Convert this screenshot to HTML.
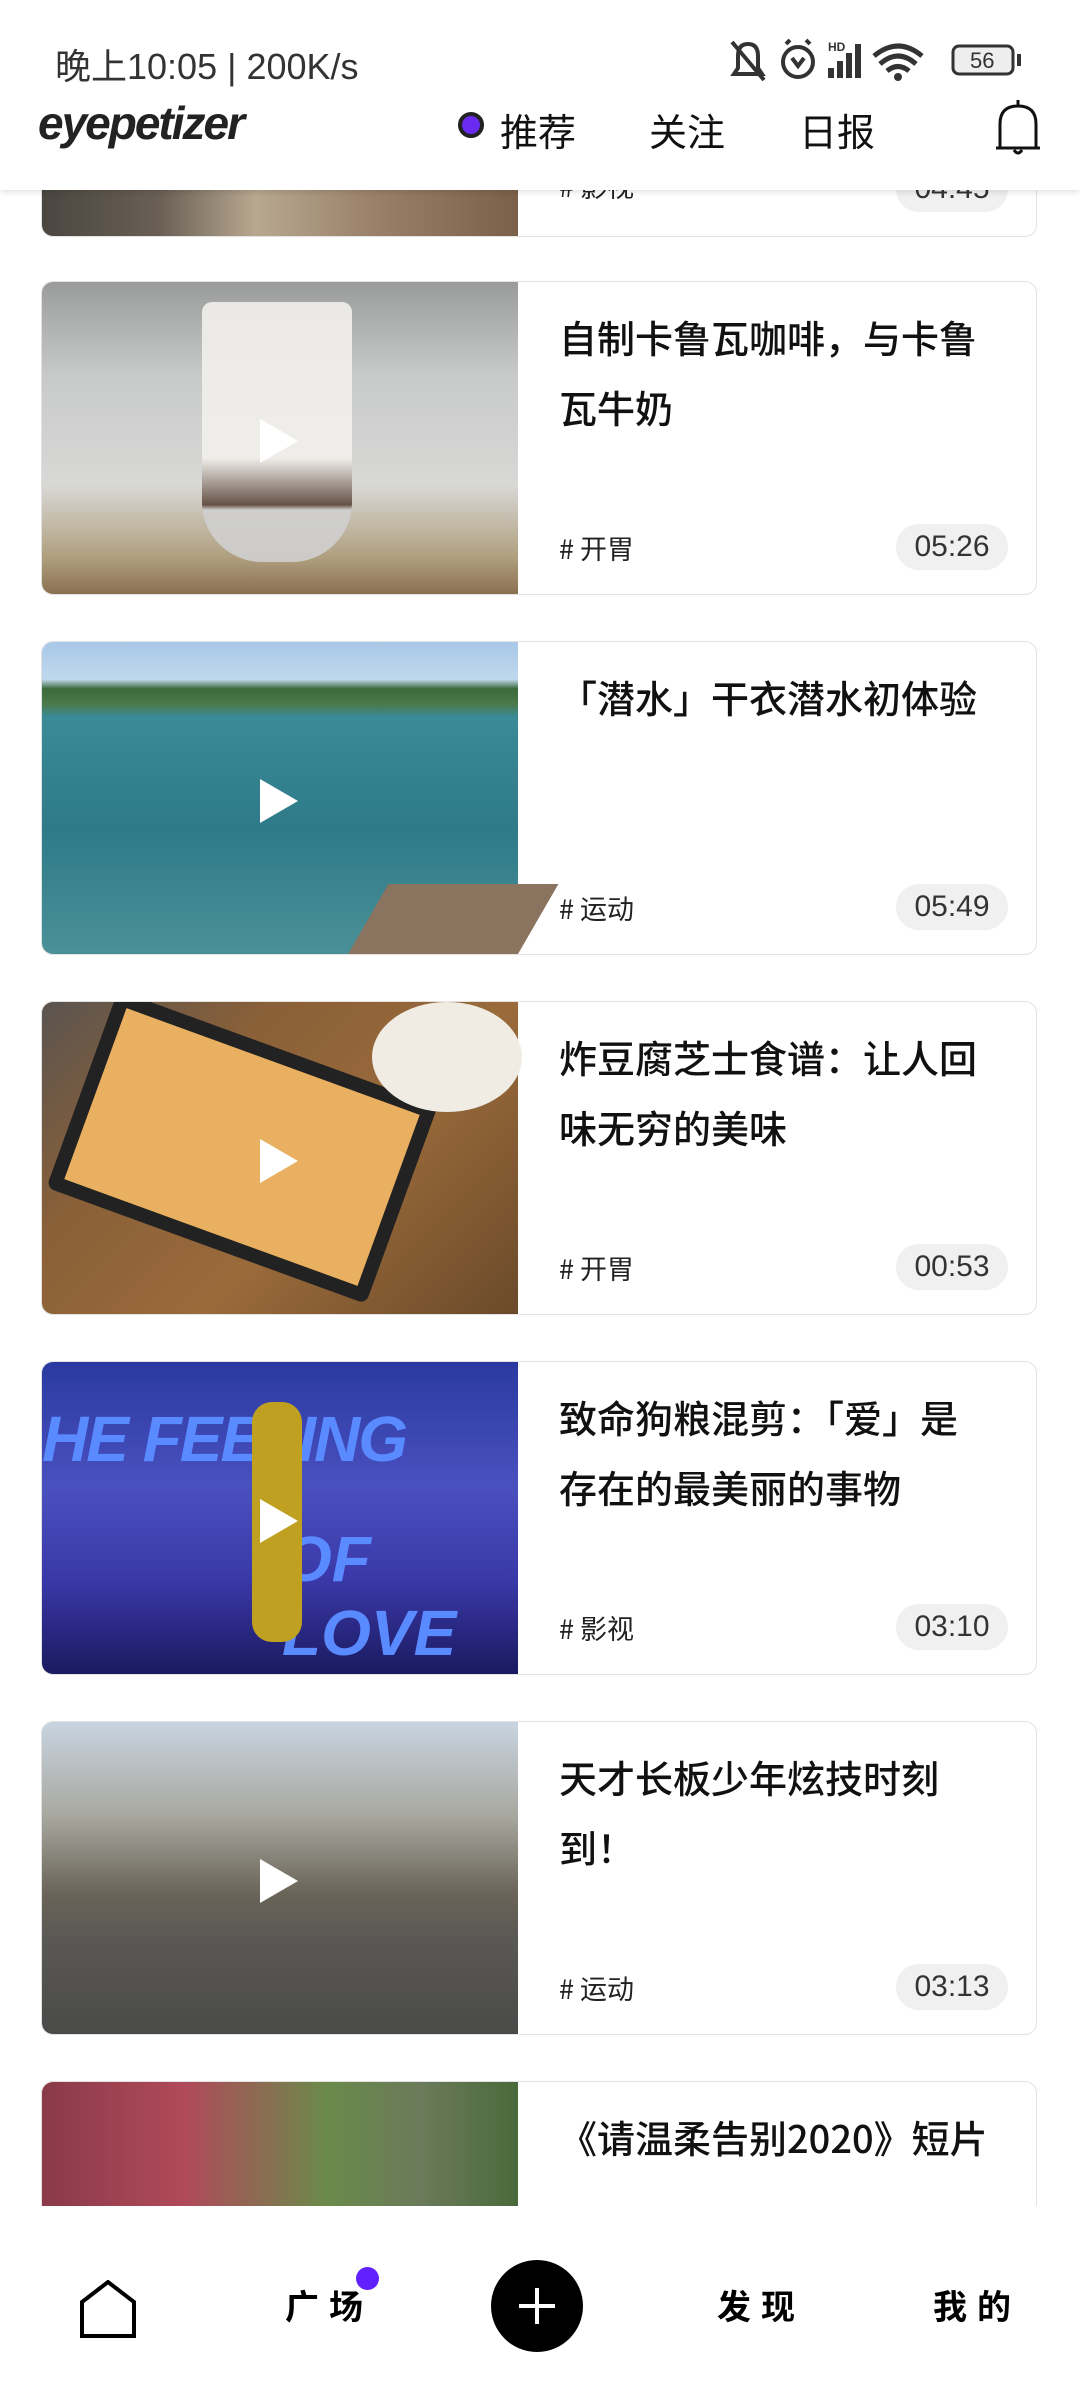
<!DOCTYPE html>
<html><head><meta charset="utf-8">
<style>
*{margin:0;padding:0;box-sizing:border-box}
body{width:1080px;height:2400px;overflow:hidden;background:#fff;font-family:"Liberation Sans","Noto Sans CJK SC",sans-serif;position:relative}
.card{position:absolute;left:41px;width:996px;height:314px;border:1.5px solid #e2e2e2;border-radius:12px;overflow:hidden;background:#fff}
.thumb{position:absolute;left:0;top:0;width:476px;height:100%}
.play{position:absolute;left:218px;top:137px;width:0;height:0;border-left:38px solid #fff;border-top:22px solid transparent;border-bottom:22px solid transparent}
.title{position:absolute;left:517px;top:20px;width:432px;font-size:38px;line-height:70px;color:#111;font-family:"Noto Sans CJK SC",sans-serif;font-weight:500}
.tag{position:absolute;left:517px;top:246px;font-size:27px;color:#222;font-family:"Noto Sans CJK SC",sans-serif}
.dur{position:absolute;right:28px;top:242px;width:112px;height:46px;border-radius:23px;background:#f0f0f0;font-size:30px;line-height:46px;text-align:center;color:#333}
.hdr{position:absolute;left:0;top:0;width:1080px;height:190px;background:#fff;box-shadow:0 2px 6px rgba(0,0,0,.12);z-index:5}
.nav{position:absolute;left:0;top:2206px;width:1080px;height:194px;background:#fff;z-index:5}
</style></head><body>

<div class="card" style="top:-77px"><div class="thumb" style="background:linear-gradient(90deg,#4a4640 0%,#6a6055 25%,#b8a890 45%,#9a8068 70%,#7a6048 100%)"></div>
<div class="tag" style="top:242px"># 影视</div><div class="dur">04:45</div></div>

<div class="card" style="top:281px"><div class="thumb" style="background:linear-gradient(180deg,#9a9c9c 0%,#c8caca 30%,#d8d8d6 65%,#b0a080 88%,#8a7050 100%)"><div style="position:absolute;left:160px;top:20px;width:150px;height:260px;background:linear-gradient(180deg,#f2f0ec 60%,#5a4438 78%,#d0d0d0 80%);border-radius:10px 10px 60px 60px;opacity:.9"></div><div class="play"></div></div>
<div class="title">自制卡鲁瓦咖啡，与卡鲁瓦牛奶</div><div class="tag"># 开胃</div><div class="dur">05:26</div></div>

<div class="card" style="top:641px"><div class="thumb" style="background:linear-gradient(180deg,#a8c8e8 0%,#c0d8ec 12%,#3a6a3a 15%,#4a7a4a 20%,#3a8a98 24%,#2e7a88 60%,#4a9098 100%)"><div style="position:absolute;right:0;bottom:0;width:170px;height:70px;background:#8a7460;transform:skewX(-30deg);transform-origin:bottom"></div><div class="play"></div></div>
<div class="title">「潜水」干衣潜水初体验</div><div class="tag"># 运动</div><div class="dur">05:49</div></div>

<div class="card" style="top:1001px"><div class="thumb" style="background:linear-gradient(135deg,#5a5450 0%,#8a6038 30%,#9a6a3a 60%,#6a4a2a 100%)"><div style="position:absolute;left:30px;top:40px;width:340px;height:210px;background:#e8b060;border:14px solid #222;transform:rotate(20deg);border-radius:8px"></div><div style="position:absolute;left:330px;top:0;width:150px;height:110px;background:#f0ece4;border-radius:50%"></div><div class="play"></div></div>
<div class="title">炸豆腐芝士食谱：让人回味无穷的美味</div><div class="tag"># 开胃</div><div class="dur">00:53</div></div>

<div class="card" style="top:1361px"><div class="thumb" style="background:linear-gradient(180deg,#2a3aa0 0%,#4a50c0 40%,#3a38a8 70%,#1a1a60 100%)"><div style="position:absolute;left:0;top:40px;font:italic 900 64px 'Liberation Sans';color:#5a8aff;letter-spacing:-2px">HE FEELING</div><div style="position:absolute;left:240px;top:160px;font:italic 900 64px 'Liberation Sans';color:#5a8aff">OF LOVE</div><div style="position:absolute;left:210px;top:40px;width:50px;height:240px;background:#c0a020;border-radius:20px"></div><div class="play"></div></div>
<div class="title">致命狗粮混剪：「爱」是存在的最美丽的事物</div><div class="tag"># 影视</div><div class="dur">03:10</div></div>

<div class="card" style="top:1721px"><div class="thumb" style="background:linear-gradient(180deg,#c8d4e0 0%,#a8a8a0 30%,#6a6458 55%,#5a5854 70%,#4a4a48 100%)"><div class="play"></div></div>
<div class="title">天才长板少年炫技时刻到！</div><div class="tag"># 运动</div><div class="dur">03:13</div></div>

<div class="card" style="top:2081px"><div class="thumb" style="background:linear-gradient(90deg,#8a3a4a 0%,#b04a5a 30%,#6a8a4a 60%,#6a7a5a 80%,#4a6a3a 100%)"><div class="play"></div></div>
<div class="title">《请温柔告别2020》短片</div></div>

<div class="hdr">
<div style="position:absolute;left:55px;top:38px;font-size:36px;color:#333;font-family:'Liberation Sans','Noto Sans CJK SC',sans-serif">晚上10:05 | 200K/s</div>
<svg style="position:absolute;left:728px;top:38px" width="310" height="46" viewBox="0 0 310 46">
<g fill="none" stroke="#333" stroke-width="4"><path d="M6 36 L34 36 L30 30 L30 18 Q30 6 20 6 Q10 6 10 18 L10 30 Z M4 4 L36 42"/><circle cx="70" cy="24" r="15"/><path d="M64 20 L70 28 L76 20"/><path d="M58 6 L62 2 M82 6 L78 2"/></g>
<text x="100" y="13" font-size="12" font-weight="bold" fill="#333" font-family="Liberation Sans">HD</text>
<g fill="#333"><rect x="100" y="30" width="6" height="10"/><rect x="109" y="23" width="6" height="17"/><rect x="118" y="15" width="6" height="25"/><rect x="127" y="6" width="6" height="34"/></g>
<path d="M146 18 Q170 -2 194 18 M152 26 Q170 10 188 26 M159 33 Q170 24 181 33" stroke="#333" stroke-width="5" fill="none"/><circle cx="170" cy="39" r="4" fill="#333"/>
<rect x="225" y="8" width="60" height="28" rx="6" fill="#eee" stroke="#333" stroke-width="3"/><rect x="289" y="16" width="4" height="12" fill="#333"/>
<text x="242" y="30" font-size="22" fill="#333" font-family="Liberation Sans">56</text></svg>
<div style="position:absolute;left:38px;top:96px;font:italic 900 46px 'Liberation Sans',sans-serif;color:#222;letter-spacing:-2px">eyepetizer</div>
<div style="position:absolute;left:458px;top:112px;width:26px;height:26px;border-radius:50%;border:4px solid #222;background:#6a2af0"></div>
<div style="position:absolute;left:500px;top:102px;font-size:38px;color:#111;font-family:'Noto Sans CJK SC',sans-serif">推荐</div>
<div style="position:absolute;left:649px;top:102px;font-size:38px;color:#111;font-family:'Noto Sans CJK SC',sans-serif">关注</div>
<div style="position:absolute;left:799px;top:102px;font-size:38px;color:#111;font-family:'Noto Sans CJK SC',sans-serif">日报</div>
<svg style="position:absolute;left:990px;top:98px" width="56" height="60" viewBox="0 0 56 60"><path d="M6 50 L50 50 M10 50 L10 26 Q10 8 28 8 Q46 8 46 26 L46 50 M28 2 L28 8 M24 52 Q28 58 32 52" stroke="#111" stroke-width="3" fill="none"/></svg>
</div>

<div class="nav">
<svg style="position:absolute;left:78px;top:74px" width="60" height="60" viewBox="0 0 60 60"><path d="M4 56 L4 22 L30 2 L56 22 L56 56 Z" stroke="#000" stroke-width="4" fill="none"/></svg>
<div style="position:absolute;left:285px;top:74px;font-size:34px;font-weight:bold;letter-spacing:10px;font-family:'Noto Sans CJK SC',sans-serif">广场</div>
<div style="position:absolute;left:356px;top:61px;width:23px;height:23px;border-radius:50%;background:#6020ff"></div>
<div style="position:absolute;left:491px;top:54px;width:92px;height:92px;border-radius:50%;background:#000"></div>
<div style="position:absolute;left:519px;top:98px;width:36px;height:4px;background:#fff"></div>
<div style="position:absolute;left:535px;top:82px;width:4px;height:36px;background:#fff"></div>
<div style="position:absolute;left:717px;top:74px;font-size:34px;font-weight:bold;letter-spacing:10px;font-family:'Noto Sans CJK SC',sans-serif">发现</div>
<div style="position:absolute;left:933px;top:74px;font-size:34px;font-weight:bold;letter-spacing:10px;font-family:'Noto Sans CJK SC',sans-serif">我的</div>
</div>
</body></html>
